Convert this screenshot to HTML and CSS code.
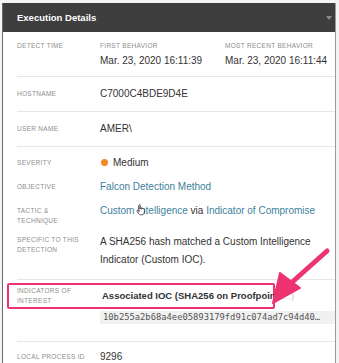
FILE: index.html
```html
<!DOCTYPE html>
<html lang="en">
<head>
    <meta charset="UTF-8">
    <meta name="viewport" content="width=device-width, initial-scale=1.0">
    <title>Execution Details</title>
    <link rel="stylesheet" href="styles.css">
</head>
<body>
    <div class="panel">
        <div class="header">
            <span>Execution Details</span>
            <span class="caret"></span>
        </div>
        <div class="body">
            <div class="row">
                <div class="label">Detect Time</div>
                <div class="times">
                    <div>
                        <div class="label">First Behavior</div>
                        <div class="value">Mar. 23, 2020 16:11:39</div>
                    </div>
                    <div>
                        <div class="label">Most Recent Behavior</div>
                        <div class="value">Mar. 23, 2020 16:11:44</div>
                    </div>
                </div>
            </div>
            <div class="row single">
                <div class="label">Hostname</div>
                <div class="value">C7000C4BDE9D4E</div>
            </div>
            <div class="row single">
                <div class="label">User Name</div>
                <div class="value">AMER\</div>
            </div>
            <div class="row group">
                <div class="line">
                    <div class="label">Severity</div>
                    <div class="value"><span class="dot"></span>Medium</div>
                </div>
                <div class="line">
                    <div class="label">Objective</div>
                    <div class="value link">Falcon Detection Method</div>
                </div>
                <div class="line tactic">
                    <div class="label">Tactic &amp; Technique</div>
                    <div class="value"><span class="link cursor-wrap">Custom Intelligence<svg class="hand" width="10" height="12" viewBox="0 0 10 12"><path d="M3 1.2c0-.7 1.2-.7 1.2 0V5l.3-1c.3-.6 1.2-.4 1.2.2v1l.3-.6c.4-.5 1.2-.2 1.1.4l.2-.2c.5-.3 1.1 0 1.1.6v2.6c0 1.6-1 2.8-2.6 2.8H4.6c-.9 0-1.5-.5-2-1.2L1 7.4c-.4-.6.4-1.3 1-.8L3 7.6z" fill="#ffffff" stroke="#3a3a3a" stroke-width="0.9" stroke-linejoin="round"/></svg></span> via <span class="link">Indicator of Compromise</span></div>
                </div>
                <div class="line">
                    <div class="label">Specific to this detection</div>
                    <div class="value tall">A SHA256 hash matched a Custom Intelligence Indicator (Custom IOC).</div>
                </div>
            </div>
            <div class="row ioc">
                <div class="line highlight">
                    <div class="label">Indicators of interest</div>
                    <div class="value bold">Associated IOC (SHA256 on Proofpoint <span class="faded">…)</span></div>
                </div>
                <div class="hash">10b255a2b68a4ee05893179fd91c074ad7c94d40…</div>
            </div>
            <div class="row single last">
                <div class="label">Local Process ID</div>
                <div class="value">9296</div>
            </div>
        </div>
    </div>

    <svg class="arrow" width="339" height="363" viewBox="0 0 339 363">
        <line x1="327" y1="251" x2="290" y2="284" stroke="#ee3470" stroke-width="5" stroke-linecap="round"/>
        <polygon points="273,303 280,273 300,288" fill="#ee3470" stroke="#ee3470" stroke-width="2" stroke-linejoin="round"/>
    </svg>
</body>
</html>
```

FILE: styles.css
```css
body {
    margin: 0;
    background-color: #f4f4f4;
    font-family: "Liberation Sans", Arial, sans-serif;
    color: #333333;
}
.panel {
    margin: 3px 3px 0 2px;
    border-left: 1px solid #6a6a6a;
    border-right: 1px solid #9a9a9a;
    background-color: #ffffff;
    height: 360px;
    overflow: hidden;
}
.header {
    height: 29px;
    background-color: #3e3e3e;
    color: #ffffff;
    font-size: 9.5px;
    font-weight: bold;
    display: flex;
    align-items: center;
    justify-content: space-between;
    padding: 0 3px 0 14px;
}
.caret {
    width: 0;
    height: 0;
    border-left: 3px solid transparent;
    border-right: 3px solid transparent;
    border-top: 4px solid #8a8a8a;
}
.body {
    padding-left: 14px;
}
.row {
    border-bottom: 1px solid #e6e6e6;
    display: flex;
}
.label {
    width: 83px;
    box-sizing: border-box;
    padding-right: 10px;
    flex-shrink: 0;
    font-size: 6.5px;
    letter-spacing: 0.3px;
    text-transform: uppercase;
    color: #8d8d8d;
    line-height: 10px;
}
.value {
    font-size: 10px;
    color: #333333;
    line-height: 12px;
}
.row:first-child {
    padding: 9px 0 9px;
}
.times {
    display: flex;
}
.times > div {
    width: 125px;
}
.times .label {
    width: auto;
    margin-bottom: 4px;
}
.row.single {
    padding: 11px 0 11px;
    align-items: center;
}
.row.group {
    flex-direction: column;
    padding: 10px 0 10px;
}
.line {
    display: flex;
    align-items: flex-start;
}
.group .line {
    margin-bottom: 12px;
}
.group .line.tactic {
    margin-bottom: 8px;
}
.group .line:last-child {
    margin-bottom: 0;
}
.group .label {
    padding-top: 1px;
}
.value.tall {
    line-height: 18px;
    margin-top: -1px;
    width: 215px;
}
.link {
    color: #3e7f9c;
}
.cursor-wrap {
    position: relative;
}
.hand {
    position: absolute;
    left: 36px;
    top: -1px;
}
.dot {
    display: inline-block;
    width: 7px;
    height: 7px;
    border-radius: 50%;
    background-color: #f28a2a;
    margin: 0 5px 0 1px;
}
.row.ioc {
    flex-direction: column;
    padding: 3px 0 17px;
}
.highlight {
    margin-left: -10px;
    width: 268px;
    box-sizing: border-box;
    padding: 1px 0 1px 8px;
    border: 2px solid #ee3470;
    border-radius: 2px;
    align-items: center;
}
.highlight .label {
    width: 85px;
}
.bold {
    font-weight: bold;
    white-space: nowrap;
    font-size: 9.5px;
}
.faded {
    color: #c8c8c8;
    font-weight: normal;
}
.hash {
    margin: 2px 0 0 83px;
    background-color: #f1f1f1;
    font-family: "DejaVu Sans Mono", monospace;
    font-size: 8.8px;
    line-height: 11px;
    color: #555555;
    padding: 1px 3px;
    white-space: nowrap;
    overflow: hidden;
}
.row.last {
    border-bottom: none;
    padding-top: 9px;
}
.arrow {
    position: absolute;
    left: 0;
    top: 0;
}
```
